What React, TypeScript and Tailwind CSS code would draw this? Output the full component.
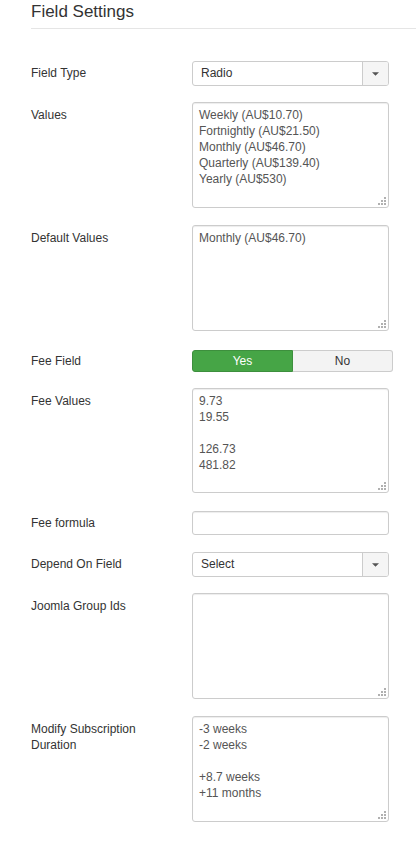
import React from "react";

// Field settings panel: label column + control column, Bootstrap-2 style inputs.

function Grip() {
  return (
    <svg
      viewBox="0 0 8 8"
      className="pointer-events-none absolute bottom-[3px] right-[3px] h-[8px] w-[8px]"
      aria-hidden
    >
      <rect x="6" y="0" width="2" height="2" fill="#b0b0b0" />
      <rect x="3" y="3" width="2" height="2" fill="#b0b0b0" />
      <rect x="6" y="3" width="2" height="2" fill="#b0b0b0" />
      <rect x="0" y="6" width="2" height="2" fill="#b0b0b0" />
      <rect x="3" y="6" width="2" height="2" fill="#b0b0b0" />
      <rect x="6" y="6" width="2" height="2" fill="#b0b0b0" />
    </svg>
  );
}

function Area({ value, h }: { value: string; h: string }) {
  return (
    <div className={`relative w-[197px] ${h}`}>
      <textarea
        readOnly
        defaultValue={value}
        className="block h-full w-full resize-none overflow-hidden rounded-[3px] border border-[#cccccc] bg-white px-[6px] pt-[4px] text-[12px] leading-[16px] text-[#555555] shadow-[inset_0_1px_1px_rgba(0,0,0,0.075)] outline-none"
      />
      <Grip />
    </div>
  );
}

function Select({ label }: { label: string }) {
  return (
    <div className="flex h-[25px] w-[197px] overflow-hidden rounded-[3px] border border-[#cccccc] bg-white">
      <span className="flex-1 pl-[8px] text-[12px] leading-[23px] text-[#333333]">
        {label}
      </span>
      <span className="flex w-[26px] items-center justify-center border-l border-[#cccccc] bg-[#f5f5f5]">
        <svg viewBox="0 0 8 4" className="h-[4px] w-[7px]" aria-hidden>
          <path d="M0 0h8L4 4z" fill="#555555" />
        </svg>
      </span>
    </div>
  );
}

function Row({
  label,
  mt,
  pt = "pt-[5px]",
  children,
}: {
  label: React.ReactNode;
  mt: string;
  pt?: string;
  children: React.ReactNode;
}) {
  return (
    <div className={`flex ${mt}`}>
      <div className={`w-[161px] shrink-0 ${pt} text-[12px] leading-[16px] text-[#333333]`}>
        {label}
      </div>
      {children}
    </div>
  );
}

export default function App() {
  return (
    <div className="min-h-[841px] bg-white pl-[31px] font-['Liberation_Sans',Arial,sans-serif]">
      <h2 className="border-b border-[#e5e5e5] pb-[4px] text-[17px] leading-[24px] text-[#333333]">
        Field Settings
      </h2>

      <Row label="Field Type" mt="mt-[32px]" pt="pt-[4px]">
        <Select label="Radio" />
      </Row>

      <Row label="Values" mt="mt-[16px]">
        <Area
          h="h-[106px]"
          value={
            "Weekly (AU$10.70)\nFortnightly (AU$21.50)\nMonthly (AU$46.70)\nQuarterly (AU$139.40)\nYearly (AU$530)"
          }
        />
      </Row>

      <Row label="Default Values" mt="mt-[17px]">
        <Area h="h-[106px]" value="Monthly (AU$46.70)" />
      </Row>

      <Row label="Fee Field" mt="mt-[19px]" pt="pt-[3px]">
        <div className="flex h-[22px] w-[201px] text-[12px] leading-[20px]">
          <span className="flex-1 rounded-l-[3px] border border-[#3d8f3d] bg-[#46a546] text-center text-white">
            Yes
          </span>
          <span className="flex-1 rounded-r-[3px] border border-l-0 border-[#cccccc] bg-[#f3f3f3] text-center text-[#333333]">
            No
          </span>
        </div>
      </Row>

      <Row label="Fee Values" mt="mt-[16px]">
        <Area h="h-[105px]" value={"9.73\n19.55\n\n126.73\n481.82"} />
      </Row>

      <Row label="Fee formula" mt="mt-[18px]" pt="pt-[4px]">
        <div className="h-[24px] w-[197px] rounded-[3px] border border-[#cccccc] bg-white shadow-[inset_0_1px_1px_rgba(0,0,0,0.075)]" />
      </Row>

      <Row label="Depend On Field" mt="mt-[17px]" pt="pt-[4px]">
        <Select label="Select" />
      </Row>

      <Row label="Joomla Group Ids" mt="mt-[16px]">
        <Area h="h-[106px]" value="" />
      </Row>

      <Row
        label={
          <>
            Modify Subscription
            <br />
            Duration
          </>
        }
        mt="mt-[17px]"
      >
        <Area
          h="h-[106px]"
          value={"-3 weeks\n-2 weeks\n\n+8.7 weeks\n+11 months"}
        />
      </Row>
    </div>
  );
}
